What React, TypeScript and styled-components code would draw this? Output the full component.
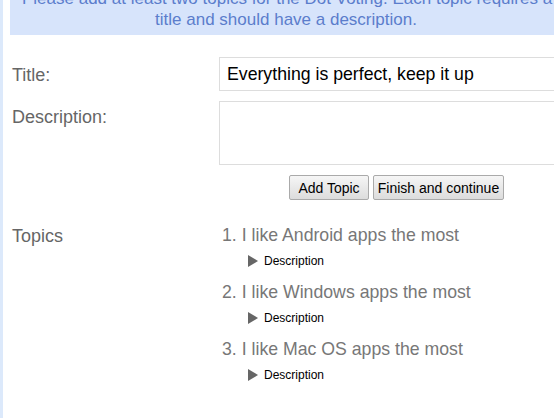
import React from 'react'
import styled, { createGlobalStyle } from 'styled-components'

const GlobalStyle = createGlobalStyle`
  html, body {
    margin: 0;
    padding: 0;
    background: #ffffff;
  }
  body {
    font-family: 'Liberation Sans', Arial, sans-serif;
  }
`

const Page = styled.div`
  width: 554px;
  height: 418px;
  overflow: hidden;
  box-sizing: border-box;
  border-left: 3px solid #dce9fb;
`

const Notice = styled.div`
  margin: -14px 0 0 7px;
  width: 552px;
  padding: 2px 0 5px;
  background: #d7e4fb;
  color: #5b7dcc;
  font-size: 17px;
  line-height: 21px;
  text-align: center;
`

const NoticeLine = styled.div<{ $indent?: number }>`
  white-space: nowrap;
  text-align: ${p => (p.$indent ? 'left' : 'center')};
  padding-left: ${p => p.$indent ?? 0}px;
`

const Form = styled.div`
  display: grid;
  grid-template-columns: 207px 1fr;
  row-gap: 10px;
  padding: 22px 0 0 9px;
`

const Label = styled.div<{ $top?: number }>`
  color: #666666;
  font-size: 18px;
  line-height: 20px;
  padding-top: ${p => p.$top ?? 0}px;
`

const TextInput = styled.input`
  box-sizing: border-box;
  width: 340px;
  height: 34px;
  border: 1px solid #dddddd;
  padding: 0 7px;
  font-family: 'Liberation Sans', Arial, sans-serif;
  font-size: 17.7px;
  color: #000;
  outline: none;
`

const TextArea = styled.textarea`
  box-sizing: border-box;
  width: 340px;
  height: 64px;
  border: 1px solid #dddddd;
  resize: none;
  outline: none;
  display: block;
`

const Buttons = styled.div`
  display: flex;
  gap: 4px;
  padding-left: 70px;
`

const Button = styled.button<{ $w: number }>`
  width: ${p => p.$w}px;
  height: 25px;
  padding: 0;
  font-family: 'Liberation Sans', Arial, sans-serif;
  font-size: 14px;
  color: #000;
  border: 1px solid #aaaaaa;
  border-radius: 2px;
  background: linear-gradient(#f6f6f6, #dcdcdc);
`

const TopicList = styled.ol`
  list-style: none;
  margin: 0;
  padding: 12px 0 0 3px;
`

const Topic = styled.li`
  margin-bottom: 5px;
`

const TopicTitle = styled.div`
  color: #777777;
  font-size: 17.7px;
  line-height: 26px;
`

const Details = styled.div`
  display: flex;
  align-items: center;
  gap: 6px;
  padding-left: 26px;
  height: 26px;
  font-size: 12px;
  color: #000;
`

const Arrow = styled.span`
  width: 0;
  height: 0;
  border-top: 6px solid transparent;
  border-bottom: 6px solid transparent;
  border-left: 10px solid #666666;
`

const topics = [
  'I like Android apps the most',
  'I like Windows apps the most',
  'I like Mac OS apps the most',
]

export default function App() {
  return (
    <>
      <GlobalStyle />
      <Page>
        <Notice>
          <NoticeLine $indent={12}>
            Please add at least two topics for the Dot Voting. Each topic requires a
          </NoticeLine>
          <NoticeLine>title and should have a description.</NoticeLine>
        </Notice>
        <Form>
          <Label $top={8}>Title:</Label>
          <TextInput defaultValue="Everything is perfect, keep it up" />
          <Label $top={6}>Description:</Label>
          <TextArea />
          <div />
          <Buttons>
            <Button $w={80}>Add Topic</Button>
            <Button $w={131}>Finish and continue</Button>
          </Buttons>
          <Label $top={16}>Topics</Label>
          <TopicList>
            {topics.map((t, i) => (
              <Topic key={t}>
                <TopicTitle>{i + 1}. {t}</TopicTitle>
                <Details>
                  <Arrow />
                  Description
                </Details>
              </Topic>
            ))}
          </TopicList>
        </Form>
      </Page>
    </>
  )
}
